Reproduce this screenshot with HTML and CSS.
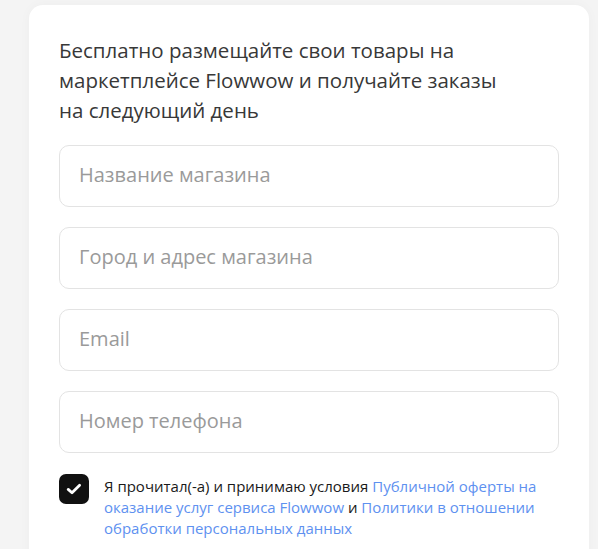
FILE: index.html
```html
<!DOCTYPE html>
<html lang="ru">
<head>
<meta charset="utf-8">
<link rel="stylesheet" href="styles.css">
</head>
<body>
<div class="card">
  <h1 class="title">Бесплатно размещайте свои товары на маркетплейсе Flowwow и получайте заказы на&nbsp;следующий день</h1>
  <form class="form">
    <input class="field" type="text" placeholder="Название магазина">
    <input class="field" type="text" placeholder="Город и адрес магазина">
    <input class="field" type="text" placeholder="Email">
    <input class="field" type="text" placeholder="Номер телефона">
    <label class="agree">
      <span class="box">
        <svg width="18" height="18" viewBox="0 0 18 18"><path d="M3.2 9.4 L7 12.8 L14.6 5.2" fill="none" stroke="#fff" stroke-width="2.8" stroke-linecap="round" stroke-linejoin="round"/></svg>
      </span>
      <span class="agree-text">Я прочитал(-а) и принимаю условия <a class="link" href="#">Публичной оферты на оказание услуг сервиса Flowwow</a> и <a class="link" href="#">Политики в отношении обработки персональных данных</a></span>
    </label>
  </form>
</div>
</body>
</html>
```
FILE: styles.css
```css
html, body {
  margin: 0;
  padding: 0;
}
body {
  background: #f4f4f4;
  font-family: "Open Sans", "Noto Sans", sans-serif;
  height: 549px;
  overflow: hidden;
}
.card {
  margin: 5px 0 0 29px;
  width: 500px;
  padding: 30px 30px 40px;
  background: #fff;
  border-radius: 14px;
  box-shadow: 0 0 12px rgba(0,0,0,0.03);
}
.title {
  margin: 0 0 20px;
  font-size: 20.5px;
  line-height: 30px;
  font-weight: 400;
  color: #383838;
  width: 470px;
}
.form {
  display: flex;
  flex-direction: column;
  gap: 20px;
}
.field {
  box-sizing: border-box;
  height: 62px;
  width: 500px;
  margin: 0;
  padding: 0 19px 3px;
  border: 1px solid #e3e3e3;
  border-radius: 10px;
  font-family: "Open Sans", "Noto Sans", sans-serif;
  font-size: 20px;
  color: #333;
  background: #fff;
  outline: none;
}
.field::placeholder {
  color: #9a9a9a;
}
.agree {
  display: flex;
  gap: 15px;
  align-items: flex-start;
  margin-top: 1px;
}
.box {
  flex: 0 0 auto;
  width: 30px;
  height: 30px;
  border-radius: 7px;
  background: #111;
  display: flex;
  align-items: center;
  justify-content: center;
}
.agree-text {
  font-size: 15px;
  line-height: 21px;
  color: #1a1a1a;
  width: 445px;
  padding-top: 2px;
}
.link {
  color: #5e91f0;
  text-decoration: none;
}
```
